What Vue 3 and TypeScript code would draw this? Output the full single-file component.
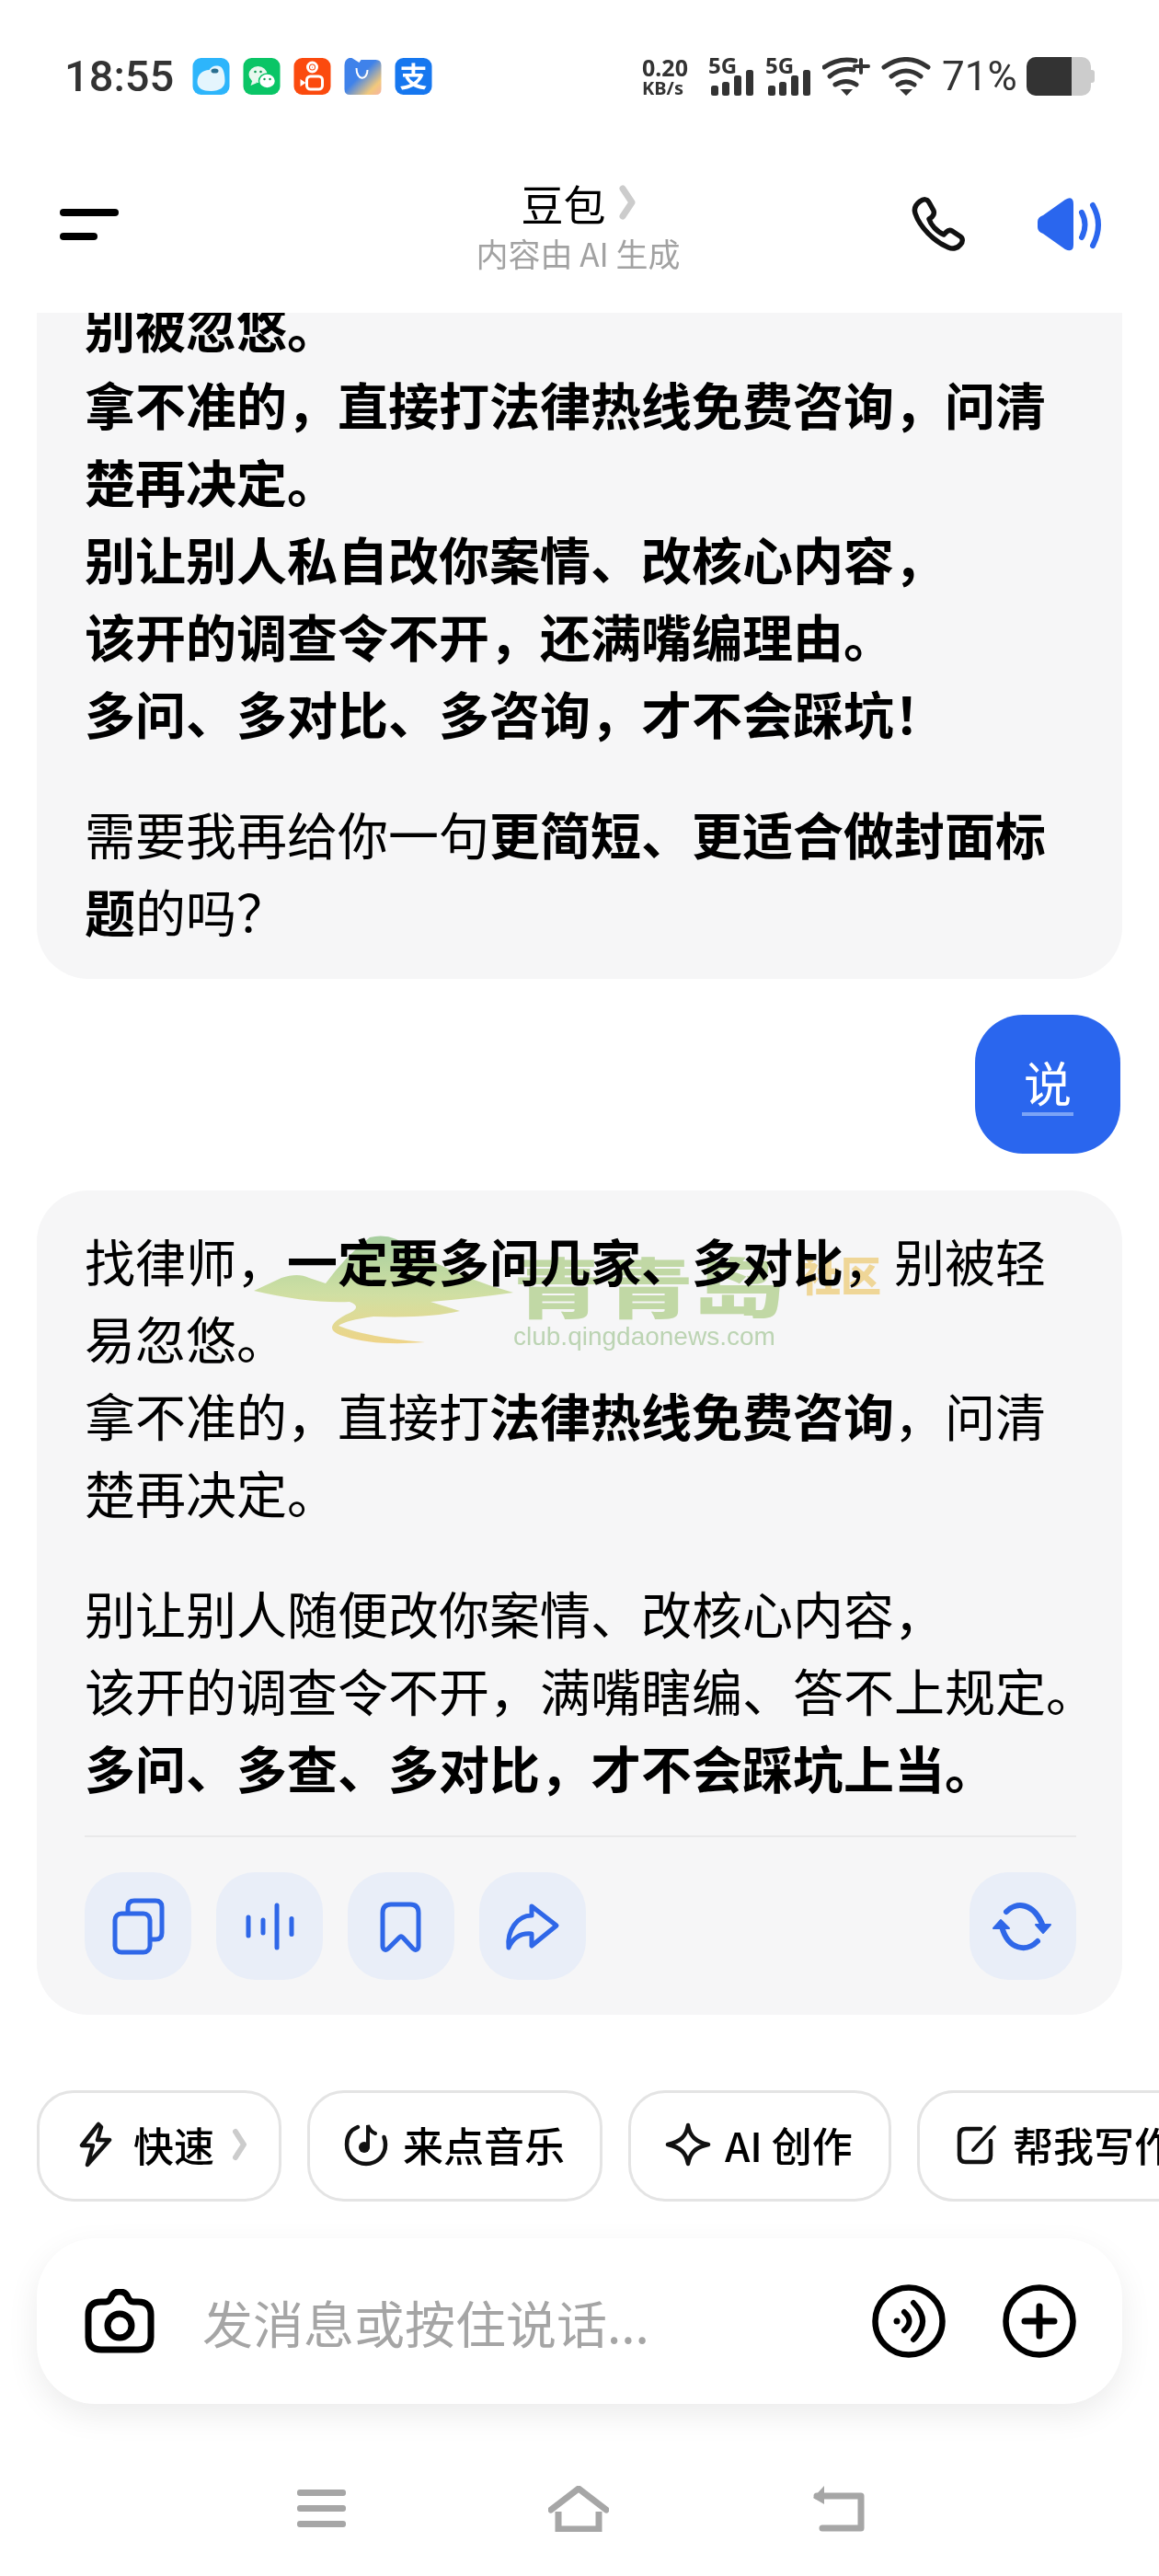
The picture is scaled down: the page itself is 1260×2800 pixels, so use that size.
<script setup lang="ts">
const signals = [0, 1];
const bars = [
  { x: 3, y: 31, h: 11 },
  { x: 15, y: 27, h: 15 },
  { x: 28, y: 20, h: 22 },
  { x: 41, y: 14, h: 28 },
];
const waves = [
  { x: 35, h: 24 },
  { x: 51, h: 18 },
  { x: 66, h: 50 },
  { x: 82, h: 21 },
];
</script>

<template>
  <div class="page">
    <header class="top">
      <div class="status">
        <div class="status-left">
          <span class="time">18:55</span>
          <svg class="app" viewBox="0 0 40 40">
            <rect width="40" height="40" rx="9" fill="#2db5fb" />
            <path d="M5 26c0-8 6-13 13-13 2-4 8-6 13-3 3 3 4 9 4 15 0 7-6 11-15 11S5 33 5 26z" fill="#e4f5fd" />
            <ellipse cx="24" cy="14" rx="4" ry="2.6" fill="#2a6f90" />
          </svg>
          <svg class="app" viewBox="0 0 40 40">
            <rect width="40" height="40" rx="9" fill="#0ac566" />
            <ellipse cx="16" cy="18" rx="10" ry="9" fill="#e8f8ee" />
            <path d="M10 24l-2 6 7-3z" fill="#e8f8ee" />
            <ellipse cx="26" cy="25" rx="9" ry="8" fill="#fff" stroke="#0ac566" stroke-width="1.5" />
            <circle cx="13" cy="15" r="1.3" fill="#0a9a50" />
            <circle cx="19" cy="15" r="1.3" fill="#0a9a50" />
            <circle cx="23" cy="23" r="1.2" fill="#0a9a50" />
            <circle cx="29" cy="23" r="1.2" fill="#0a9a50" />
          </svg>
          <svg class="app" viewBox="0 0 40 40">
            <rect width="40" height="40" rx="9" fill="#fb4a0e" />
            <g fill="none" stroke="#fff" stroke-width="3">
              <circle cx="20" cy="10" r="5" />
              <circle cx="20" cy="10" r="1" />
              <rect x="14" y="20" width="17" height="14" rx="4" />
            </g>
            <path d="M13 27l-6-4v8z" fill="#fff" />
          </svg>
          <svg class="app" viewBox="0 0 40 40">
            <defs>
              <linearGradient id="bag" x1="0" y1="0" x2="1" y2="1">
                <stop offset="0.45" stop-color="#3f82ea" />
                <stop offset="0.8" stop-color="#f2c97c" />
                <stop offset="1" stop-color="#f7b3a4" />
              </linearGradient>
            </defs>
            <path d="M0 8Q0 2 5 0h3l8 5 2-3h16q6 0 6 6v26q0 6-6 6H6q-6 0-6-6z" fill="url(#bag)" />
            <path d="M13 11c0 14 12 14 12 2" fill="none" stroke="#fff" stroke-width="2" />
          </svg>
          <svg class="app" viewBox="0 0 40 40">
            <rect width="40" height="40" rx="9" fill="#1677ef" />
            <text x="20" y="31" text-anchor="middle" class="ali">支</text>
          </svg>
        </div>
        <div class="status-right">
          <div class="net"><span>0.20</span><span class="unit">KB/s</span></div>
          <svg v-for="s in signals" :key="s" class="sig" viewBox="0 0 50 42">
            <text x="0" y="18" class="five">5G</text>
            <rect v-for="b in bars" :key="b.x" :x="b.x" :y="b.y" width="8" :height="b.h" rx="2.5" fill="#333" />
          </svg>
          <svg class="wifi" viewBox="0 0 52 42">
            <g fill="none" stroke="#333" stroke-width="5" stroke-linecap="round">
              <path d="M2 11Q18 0 36 4" />
              <path d="M8 21Q20 11 34 14" />
              <path d="M14 30Q26 23 37 30" />
              <path d="M42 3V17M35 10H50" stroke-width="4" />
            </g>
            <path d="M20 35H33L26.500 42z" fill="#333" />
          </svg>
          <svg class="wifi2" viewBox="0 0 54 42">
            <g fill="none" stroke="#333" stroke-width="5" stroke-linecap="round">
              <path d="M3 11Q27 -6 51 11" />
              <path d="M11 21Q27 9 43 21" />
              <path d="M18 30Q27 24 36 30" />
            </g>
            <path d="M20 35H34L27 42z" fill="#333" />
          </svg>
          <span class="pct">71%</span>
          <div class="battery"><div class="battery-in"><div class="battery-fill"></div></div><div class="battery-nub"></div></div>
        </div>
      </div>
      <div class="titlebar">
        <div class="burger"><i></i><i class="short"></i></div>
        <div class="title-col">
          <div class="title">豆包<svg class="more" viewBox="0 0 18 38"><path d="M4 4L14 19 4 34" fill="none" stroke="#ccc" stroke-width="7" stroke-linecap="round" stroke-linejoin="round" /></svg></div>
          <div class="sub">内容由 AI 生成</div>
        </div>
        <div class="title-actions">
          <svg class="phone" viewBox="0 0 60 60">
            <path d="M10 5c4-3 8-3 10 1l5 9c1 3 0 5-2 7l-3 2c2 7 9 14 16 17l3-3c2-2 4-2 6-1l9 6c3 2 3 6 0 9-3 4-8 5-13 3C26 49 10 33 5 18 3 12 6 8 10 5z" fill="none" stroke="#111" stroke-width="5.500" stroke-linejoin="round" />
          </svg>
          <svg class="speaker" viewBox="0 0 72 58">
            <path d="M6 19L30 2q9-5 9 5v44q0 9-9 5L6 39q-6-2-6-7v-6q0-5 6-7z" fill="#2a66ee" />
            <path d="M48 16q7 13 0 27" fill="none" stroke="#2a66ee" stroke-width="6" stroke-linecap="round" />
            <path d="M60 8q12 21 0 44" fill="none" stroke="#2a66ee" stroke-width="6" stroke-linecap="round" />
          </svg>
        </div>
      </div>
    </header>

    <main class="messages">
      <section class="bubble first">
        <p class="strong">别被忽悠。<br />拿不准的，直接打法律热线免费咨询，问清<br />楚再决定。<br />别让别人私自改你案情、改核心内容，<br />该开的调查令不开，还满嘴编理由。<br />多问、多对比、多咨询，才不会踩坑！</p>
        <p>需要我再给你一句<b>更简短、更适合做封面标</b><br /><b>题</b>的吗？</p>
      </section>

      <div class="mine"><span class="mine-text">说</span></div>

      <section class="bubble answer">
        <p>找律师，<b>一定要多问几家、多对比</b>，别被轻<br />易忽悠。<br />拿不准的，直接打<b>法律热线免费咨询</b>，问清<br />楚再决定。</p>
        <p>别让别人随便改你案情、改核心内容，<br />该开的调查令不开，满嘴瞎编、答不上规定。<br /><b>多问、多查、多对比，才不会踩坑上当。</b></p>
        <div class="actions">
          <button class="act">
            <svg viewBox="0 0 116 116">
              <path d="M47 44V37q0-7 7-7h23q7 0 7 7v28q0 7-7 7h-6" fill="none" stroke="#2f67e8" stroke-width="5" />
              <rect x="33" y="44" width="38" height="42" rx="7" fill="none" stroke="#2f67e8" stroke-width="5" />
            </svg>
          </button>
          <button class="act">
            <svg viewBox="0 0 116 116">
              <line v-for="w in waves" :key="w.x" :x1="w.x" :x2="w.x" :y1="58 - w.h / 2 + 2" :y2="58 + w.h / 2 - 2" stroke="#2f67e8" stroke-width="5" stroke-linecap="round" />
            </svg>
          </button>
          <button class="act">
            <svg viewBox="0 0 116 116">
              <path d="M38 43q0-9 9-9h21q9 0 9 9v36q0 3-2 4-2 1-4-1L60 70q-2-2-4 0L44 82q-2 2-4 1-2-1-2-4z" fill="none" stroke="#2f67e8" stroke-width="5" stroke-linejoin="round" />
            </svg>
          </button>
          <button class="act">
            <svg viewBox="0 0 116 116">
              <path d="M57 36L84 57 57 79V66C46 65 37 70 32 81 30 63 41 46 57 46z" fill="none" stroke="#2f67e8" stroke-width="5" stroke-linejoin="round" />
            </svg>
          </button>
          <button class="act refresh">
            <svg viewBox="0 0 116 116">
              <g fill="none" stroke="#2f67e8" stroke-width="6" stroke-linecap="round">
                <path d="M40 42C50 31 70 31 80 58" />
                <path d="M74 74C62 86 42 84 35 58" />
              </g>
              <path d="M72 56H88L80 65zM26 60H43L34 51z" fill="#2f67e8" stroke="#2f67e8" stroke-width="2" stroke-linejoin="round" />
            </svg>
          </button>
        </div>
        <div class="watermark">
          <svg class="wm-logo" viewBox="0 0 284 118">
            <defs>
              <linearGradient id="hill" x1="0" y1="0" x2="0" y2="1">
                <stop offset="0" stop-color="#acd6a4" />
                <stop offset="0.55" stop-color="#d8e8a8" />
                <stop offset="1" stop-color="#f8dc8c" />
              </linearGradient>
            </defs>
            <path d="M0 60L30 46Q48 40 60 46L78 52Q100 22 126 2 150 -4 170 14 220 45 282 62 240 68 192 72 205 76 224 82 190 90 130 88 100 92 92 98 120 110 186 116 130 120 100 110 70 102 100 86 120 78 104 72 60 74 0 60z" fill="url(#hill)" />
          </svg>
          <div class="wm-main"><span class="wm-name">青青岛</span><span class="wm-url">club.qingdaonews.com</span></div>
          <span class="wm-club">社区</span>
        </div>
      </section>
    </main>

    <div class="chips">
      <div class="chip c1">
        <svg class="c-bolt" viewBox="0 0 36 50"><path d="M21 3L3 26H15L9 47 33 20H20L24 6z" fill="none" stroke="#111" stroke-width="4.500" stroke-linejoin="round" /></svg>
        <span>快速</span>
        <svg class="c-more" viewBox="0 0 16 36"><path d="M3 4L12 18 3 32" fill="none" stroke="#ccc" stroke-width="6" stroke-linecap="round" stroke-linejoin="round" /></svg>
      </div>
      <div class="chip c2">
        <svg class="c-music" viewBox="0 0 48 48">
          <path d="M15 5C7 8 3 15 3 24c0 12 9 21 21 21s21-9 21-21c0-3-.5-5-1.500-8" fill="none" stroke="#111" stroke-width="4.500" stroke-linecap="round" />
          <circle cx="22" cy="27" r="6" fill="#111" />
          <path d="M26 27V3q2 7 8 9" fill="none" stroke="#111" stroke-width="4" stroke-linecap="round" />
        </svg>
        <span>来点音乐</span>
      </div>
      <div class="chip c3">
        <svg class="c-star" viewBox="0 0 50 48"><path d="M25 3C27 15 33 21 47 24 33 27 27 33 25 45 23 33 17 27 3 24 17 21 23 15 25 3z" fill="none" stroke="#111" stroke-width="4.500" stroke-linejoin="round" /></svg>
        <span>AI 创作</span>
      </div>
      <div class="chip c4">
        <svg class="c-edit" viewBox="0 0 44 44">
          <path d="M26 5H10Q3 5 3 12V34Q3 41 10 41H30Q37 41 37 34V18" fill="none" stroke="#111" stroke-width="4.500" stroke-linecap="round" />
          <path d="M41 3L18 28" fill="none" stroke="#111" stroke-width="4" stroke-linecap="round" />
        </svg>
        <span>帮我写作</span>
      </div>
    </div>

    <div class="composer">
      <svg class="camera" viewBox="0 0 76 70">
        <path d="M18 14H23Q27 14 29 9 31 3 38 3 45 3 47 9 49 14 53 14H58Q72 14 72 28V52Q72 66 58 66H18Q4 66 4 52V28Q4 14 18 14z" fill="none" stroke="#000" stroke-width="7" stroke-linejoin="round" />
        <circle cx="38" cy="40" r="13" fill="none" stroke="#000" stroke-width="7" />
      </svg>
      <span class="placeholder">发消息或按住说话...</span>
      <svg class="round" viewBox="0 0 80 80">
        <circle cx="40" cy="40" r="36.500" fill="none" stroke="#000" stroke-width="6.500" />
        <circle cx="27" cy="40" r="3.500" fill="#000" />
        <path d="M35 30Q46 40 35 50" fill="none" stroke="#000" stroke-width="6" stroke-linecap="round" />
        <path d="M45 20Q65 40 45 60" fill="none" stroke="#000" stroke-width="6" stroke-linecap="round" />
      </svg>
      <svg class="round" viewBox="0 0 80 80">
        <circle cx="40" cy="40" r="36.500" fill="none" stroke="#000" stroke-width="6.500" />
        <path d="M40 24V56M24 40H56" fill="none" stroke="#000" stroke-width="7" stroke-linecap="round" />
      </svg>
    </div>

    <nav class="nav">
      <div class="nav-menu"><i></i><i></i><i></i></div>
      <svg class="nav-home" viewBox="0 0 66 50">
        <path d="M3 26L33 3 63 26" fill="none" stroke="#a6a6a6" stroke-width="7" stroke-linecap="round" stroke-linejoin="round" />
        <path d="M11 28V47H55V28" fill="none" stroke="#a6a6a6" stroke-width="7" />
      </svg>
      <svg class="nav-back" viewBox="0 0 58 50">
        <path d="M6 11H54V46H12" fill="none" stroke="#a6a6a6" stroke-width="7" stroke-linecap="round" stroke-linejoin="round" />
        <path d="M14 0V20L2 13z" fill="#a6a6a6" />
      </svg>
    </nav>
  </div>
</template>

<style scoped>
.page {
  width: 1260px;
  height: 2800px;
  display: flex;
  flex-direction: column;
  overflow: hidden;
  background: #fff;
  font-family: "Noto Sans CJK SC", "Noto Sans", sans-serif;
  color: #000;
}

.top {
  height: 340px;
  flex-shrink: 0;
}

.status {
  display: flex;
  justify-content: space-between;
  align-items: center;
  height: 42px;
  padding: 62px 70px 0 70px;
}
.status-left,
.status-right {
  display: flex;
  align-items: center;
}
.status-left {
  gap: 14px;
}
.status-right {
  gap: 12px;
}
.time {
  font-family: Roboto, sans-serif;
  font-weight: 500;
  font-size: 47px;
  line-height: 42px;
  color: #333;
  width: 125px;
}
.app {
  width: 41px;
  height: 40px;
}
.ali {
  font-family: "Noto Sans CJK SC", sans-serif;
  font-weight: 700;
  font-size: 30px;
  fill: #fff;
}
.net {
  width: 60px;
  display: flex;
  flex-direction: column;
  font-family: "Noto Sans", sans-serif;
  font-weight: 700;
  font-size: 25px;
  line-height: 25px;
  color: #333;
}
.unit {
  font-size: 20px;
  line-height: 19px;
}
.sig {
  width: 50px;
  height: 42px;
  overflow: visible;
}
.five {
  font-family: "Noto Sans", sans-serif;
  font-weight: 700;
  font-size: 24px;
  fill: #333;
}
.wifi {
  width: 52px;
  height: 42px;
}
.wifi2 {
  width: 54px;
  height: 42px;
}
.pct {
  width: 80px;
  font-family: Roboto, sans-serif;
  font-size: 44px;
  line-height: 42px;
  color: #333;
}
.battery {
  display: flex;
  align-items: center;
  width: 74px;
  height: 42px;
}
.battery-in {
  width: 70px;
  height: 42px;
  border-radius: 10px;
  background: #ccc;
  overflow: hidden;
}
.battery-fill {
  width: 49px;
  height: 100%;
  background: #333;
}
.battery-nub {
  width: 4px;
  height: 14px;
  background: #ccc;
  border-radius: 0 3px 3px 0;
}

.titlebar {
  display: grid;
  grid-template-columns: 1fr auto 1fr;
  align-items: center;
  padding: 92px 60px 0 65px;
}
.burger {
  margin-bottom: 6px;
}
.burger i {
  display: block;
  width: 64px;
  height: 8px;
  border-radius: 4px;
  background: #000;
}
.burger .short {
  width: 41px;
  margin-top: 18px;
}
.title-col {
  text-align: center;
  margin-right: 8px;
}
.title {
  display: flex;
  align-items: center;
  justify-content: center;
  font-size: 46px;
  line-height: 48px;
}
.more {
  width: 18px;
  height: 38px;
  margin-left: 14px;
}
.sub {
  margin-top: 9px;
  font-size: 35px;
  line-height: 44px;
  color: #a2a2a2;
}
.title-actions {
  display: flex;
  justify-content: flex-end;
  align-items: center;
  gap: 78px;
  margin-bottom: 6px;
}
.phone {
  width: 60px;
  height: 60px;
}
.speaker {
  width: 72px;
  height: 58px;
}

.messages {
  flex: 1;
  min-height: 0;
  display: flex;
  flex-direction: column;
  justify-content: flex-end;
  overflow: hidden;
  padding: 0 40px 82px;
}
.bubble {
  position: relative;
  flex-shrink: 0;
  background: #f6f6f7;
  border-radius: 56px;
  padding: 33px 50px 33px 52px;
  font-size: 55px;
  line-height: 84px;
  white-space: nowrap;
}
.bubble p {
  margin: 0;
}
.bubble p + p {
  margin-top: 47px;
}
.bubble b,
.strong {
  font-weight: 700;
}
.mine {
  align-self: flex-end;
  width: 158px;
  height: 151px;
  flex-shrink: 0;
  margin: 39px 2px 40px 0;
  display: flex;
  align-items: center;
  justify-content: center;
  border-radius: 52px;
  background: #2a66ee;
  color: #fff;
  font-size: 52px;
}
.mine-text {
  line-height: 62px;
  padding: 0 2px 2px;
  border-bottom: 4px solid #7ba3f6;
}
.answer {
  padding-bottom: 38px;
}
.actions {
  display: flex;
  gap: 27px;
  margin-top: 33px;
  padding-top: 38px;
  border-top: 2px solid #e9e9ea;
}
.act {
  width: 116px;
  height: 117px;
  padding: 0;
  border: 0;
  border-radius: 42px;
  background: #e9eef8;
}
.act svg {
  display: block;
  width: 116px;
  height: 116px;
}
.refresh {
  margin-left: auto;
}

.watermark {
  position: absolute;
  left: 236px;
  top: 49px;
  display: flex;
  mix-blend-mode: multiply;
}
.wm-logo {
  width: 284px;
  height: 118px;
  flex-shrink: 0;
}
.wm-main {
  width: 300px;
  display: flex;
  flex-direction: column;
  align-items: flex-start;
  margin-left: -2px;
}
.wm-name {
  margin: 18px 0 -28px;
  font-size: 98px;
  line-height: 98px;
  font-weight: 900;
  color: #c8e0aa;
  transform: scaleY(0.72);
  transform-origin: top;
}
.wm-url {
  margin-top: 7px;
  font-family: "Liberation Sans", sans-serif;
  font-size: 28px;
  line-height: 30px;
  color: #c3dcb9;
  white-space: nowrap;
}
.wm-club {
  margin: 20px 0 0 12px;
  font-size: 44px;
  line-height: 44px;
  font-weight: 900;
  color: #f8de9c;
}

.chips {
  display: flex;
  gap: 28px;
  padding-left: 40px;
  flex-shrink: 0;
}
.chip {
  display: flex;
  align-items: center;
  flex-shrink: 0;
  box-sizing: border-box;
  height: 121px;
  padding-bottom: 3px;
  border: 3px solid #e4e4e4;
  border-radius: 40px;
  font-size: 44px;
  font-weight: 500;
  line-height: 56px;
  white-space: nowrap;
}
.c1 {
  width: 266px;
  padding-left: 43px;
}
.c2 {
  width: 321px;
  padding-left: 37px;
}
.c3 {
  width: 286px;
  padding-left: 37px;
}
.c4 {
  width: 300px;
  padding-left: 40px;
}
.c-bolt {
  width: 36px;
  height: 50px;
  margin-right: 23px;
}
.c-more {
  width: 16px;
  height: 36px;
  margin-left: 20px;
}
.c-music {
  width: 48px;
  height: 48px;
  margin-right: 16px;
}
.c-star {
  width: 50px;
  height: 48px;
  margin-right: 15px;
}
.c-edit {
  width: 44px;
  height: 44px;
  margin-right: 17px;
}

.composer {
  flex-shrink: 0;
  display: flex;
  align-items: center;
  height: 180px;
  margin: 40px 40px 0;
  padding: 0 50px 0 52px;
  border-radius: 64px;
  background: #fff;
  box-shadow: 0 12px 34px rgba(0, 0, 0, 0.08);
}
.camera {
  width: 76px;
  height: 70px;
}
.placeholder {
  flex: 1;
  margin-left: 52px;
  font-size: 55px;
  color: #a5a5a5;
}
.round {
  width: 80px;
  height: 80px;
  margin-left: 62px;
}

.nav {
  flex-shrink: 0;
  height: 187px;
  box-sizing: border-box;
  padding: 89px 0 0 2px;
  display: flex;
  justify-content: center;
  align-items: flex-start;
  gap: 220px;
}
.nav-menu {
  margin-top: 4px;
  width: 53px;
}
.nav-menu i {
  display: block;
  height: 7px;
  margin-bottom: 10px;
  border-radius: 3px;
  background: #a6a6a6;
}
.nav-home {
  width: 66px;
  height: 50px;
}
.nav-back {
  width: 58px;
  height: 50px;
}
</style>
